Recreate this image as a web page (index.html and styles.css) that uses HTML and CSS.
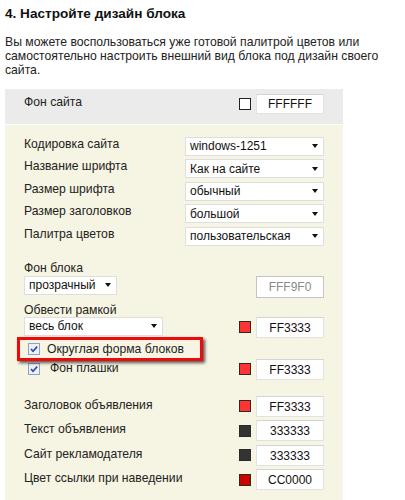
FILE: index.html
```html
<!DOCTYPE html>
<html lang="ru">
<head>
<meta charset="utf-8">
<title>Дизайн блока</title>
<link rel="stylesheet" href="styles.css">
</head>
<body>
<h3 class="title">4. Настройте дизайн блока</h3>
<p class="intro">Вы можете воспользоваться уже готовой палитрой цветов или самостоятельно настроить внешний вид блока под дизайн своего сайта.</p>

<div class="panel">
  <div class="site-bg">
    <span class="label">Фон сайта</span>
    <div class="color-pick">
      <span class="box-empty"></span>
      <span class="hex">FFFFFF</span>
    </div>
  </div>

  <div class="settings">
    <div class="selects">
      <span class="label">Кодировка сайта</span>
      <div class="select wide"><span>windows-1251</span><i class="arrow"></i></div>
      <span class="label">Название шрифта</span>
      <div class="select wide"><span>Как на сайте</span><i class="arrow"></i></div>
      <span class="label">Размер шрифта</span>
      <div class="select wide"><span>обычный</span><i class="arrow"></i></div>
      <span class="label">Размер заголовков</span>
      <div class="select wide"><span>большой</span><i class="arrow"></i></div>
      <span class="label">Палитра цветов</span>
      <div class="select wide"><span>пользовательская</span><i class="arrow"></i></div>
    </div>

    <div class="block-row first">
      <div class="stack">
        <span class="label">Фон блока</span>
        <div class="select narrow"><span>прозрачный</span><i class="arrow"></i></div>
      </div>
      <div class="color-pick lower">
        <span class="hex disabled">FFF9F0</span>
      </div>
    </div>

    <div class="block-row second">
      <div class="stack">
        <span class="label">Обвести рамкой</span>
        <div class="select medium"><span>весь блок</span><i class="arrow"></i></div>
      </div>
      <div class="color-pick lower">
        <span class="swatch red"></span>
        <span class="hex">FF3333</span>
      </div>
    </div>

    <div class="check-row highlight">
      <span class="check"><svg viewBox="0 0 12 12" width="12" height="12"><rect x="0.5" y="0.5" width="11" height="11" fill="#eef0f6" stroke="#8ea3c4"/><path d="M3 6 L5 8.2 L9.2 3.6" fill="none" stroke="#2b49b3" stroke-width="1.6"/></svg></span>
      <span class="check-text">Округлая форма блоков</span>
    </div>

    <div class="check-row plate">
      <div class="check-left">
        <span class="check"><svg viewBox="0 0 12 12" width="12" height="12"><rect x="0.5" y="0.5" width="11" height="11" fill="#eef0f6" stroke="#8ea3c4"/><path d="M3 6 L5 8.2 L9.2 3.6" fill="none" stroke="#2b49b3" stroke-width="1.6"/></svg></span>
        <span class="check-text wide-gap">Фон плашки</span>
      </div>
      <div class="color-pick">
        <span class="swatch red"></span>
        <span class="hex">FF3333</span>
      </div>
    </div>

    <div class="colors">
      <span class="label">Заголовок объявления</span>
      <div class="color-pick"><span class="swatch red"></span><span class="hex">FF3333</span></div>
      <span class="label">Текст объявления</span>
      <div class="color-pick"><span class="swatch dark"></span><span class="hex">333333</span></div>
      <span class="label">Сайт рекламодателя</span>
      <div class="color-pick"><span class="swatch dark"></span><span class="hex">333333</span></div>
      <span class="label">Цвет ссылки при наведении</span>
      <div class="color-pick"><span class="swatch crimson"></span><span class="hex">CC0000</span></div>
    </div>
  </div>
</div>
</body>
</html>
```

FILE: styles.css
```css
html, body {
  margin: 0;
  padding: 0;
  background: #ffffff;
}

body {
  font-family: "Liberation Sans", Arial, sans-serif;
  color: #1e1e1e;
  font-size: 12px;
}

.title {
  margin: 0;
  padding: 5px 0 0 5px;
  font-size: 13.6px;
  line-height: 17px;
  font-weight: bold;
  color: #111;
}

.intro {
  margin: 13px 0 0 5px;
  width: 380px;
  font-size: 12.2px;
  line-height: 14.2px;
  color: #222;
}

.panel {
  margin: 11px 0 0 5px;
  width: 338px;
}

.label {
  font-size: 12.2px;
  line-height: 15px;
  color: #222;
}

.site-bg {
  background: #ebebeb;
  height: 35px;
  box-sizing: border-box;
  padding: 0 19px;
  display: flex;
  align-items: flex-start;
  justify-content: space-between;
}

.site-bg .label {
  margin-top: 6px;
}

.site-bg .color-pick {
  margin-top: 5px;
}

.color-pick {
  display: flex;
  align-items: center;
  gap: 5px;
}

.box-empty {
  width: 10px;
  height: 10px;
  border: 1px solid #222;
  background: #fff;
}

.hex {
  width: 68px;
  height: 21px;
  box-sizing: border-box;
  background: #fff;
  border: 1px solid #e2e2e2;
  border-top-color: #d4d4d4;
  font-size: 12px;
  line-height: 20px;
  text-align: center;
  color: #111;
}

.site-bg .hex {
  height: 20px;
  line-height: 19px;
}

.hex.disabled {
  border-color: #c4c4c4;
  color: #8a8a8a;
  height: 22px;
  line-height: 21px;
}

.swatch {
  width: 10px;
  height: 10px;
  border: 1px solid #2a2a2a;
}

.swatch.red { background: #ff3333; }
.swatch.dark { background: #333333; }
.swatch.crimson { background: #cc0000; }

.settings {
  margin-top: 1px;
  background: #f6f4e2;
  padding: 12px 19px 24px 19px;
}

.selects {
  display: grid;
  grid-template-columns: 1fr 139px;
  grid-auto-rows: 19px;
  row-gap: 3.5px;
}

.select {
  height: 19px;
  box-sizing: border-box;
  background: #fff;
  border: 1px solid #dedede;
  display: flex;
  align-items: center;
  justify-content: space-between;
  padding: 0 5px 0 4px;
  font-size: 12px;
  color: #111;
}

.select span {
  line-height: 17px;
  padding-top: 1px;
}

.arrow {
  width: 0;
  height: 0;
  border-left: 3px solid transparent;
  border-right: 3px solid transparent;
  border-top: 4px solid #111;
}

.select.narrow { width: 93px; }
.select.medium { width: 139px; }

.block-row {
  display: flex;
  justify-content: space-between;
  align-items: flex-start;
}

.block-row.first { margin-top: 15px; }
.block-row.second { margin-top: 5px; }

.stack {
  display: flex;
  flex-direction: column;
}

.block-row.second .stack .label {
  line-height: 14px;
}

.color-pick.lower {
  margin-top: 15px;
}

.block-row.second .color-pick.lower {
  margin-top: 14px;
}

.check-row {
  display: flex;
  align-items: center;
}

.check {
  display: block;
  width: 12px;
  height: 12px;
}

.check svg { display: block; }

.check-text {
  margin-left: 7px;
  font-size: 12.2px;
  line-height: 16px;
  color: #1e1e1e;
}

.check-text.wide-gap {
  margin-left: 10px;
  margin-top: -2px;
}

.highlight {
  position: relative;
  margin-top: 3px;
  height: 16px;
  padding-left: 4px;
}

.highlight::after {
  content: "";
  position: absolute;
  left: -7px;
  top: -4px;
  width: 186px;
  height: 24px;
  box-sizing: border-box;
  border: 3px solid #ee0a0a;
  box-shadow: 2px 2px 3px rgba(0, 0, 0, 0.65);
  z-index: 2;
}

.plate {
  margin-top: 2px;
  justify-content: space-between;
  height: 21px;
}

.check-left {
  display: flex;
  align-items: center;
  padding-left: 4px;
}

.colors {
  margin-top: 16px;
  display: grid;
  grid-template-columns: 1fr auto;
  grid-auto-rows: 21px;
  row-gap: 3.5px;
  align-items: center;
}

.colors .label {
  margin-top: -2px;
}
```
